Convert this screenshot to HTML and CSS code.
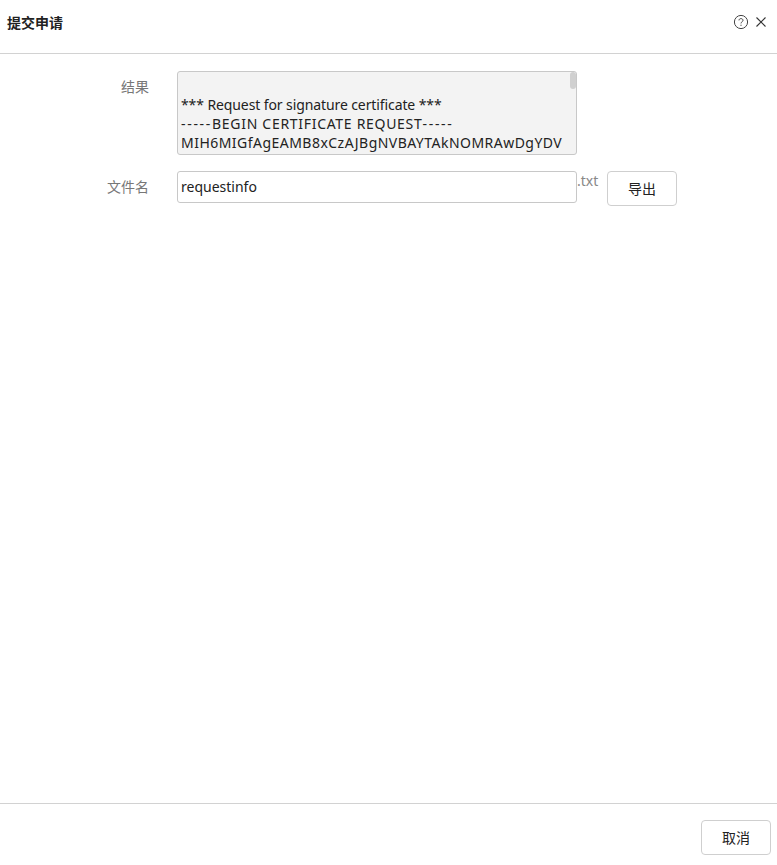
FILE: index.html
```html
<!DOCTYPE html>
<html lang="zh">
<head>
<meta charset="utf-8">
<title>提交申请</title>
<link rel="stylesheet" href="styles.css">
</head>
<body>
<div class="dialog">
  <header class="head">
    <h1 class="title">提交申请</h1>
    <div class="tools">
      <svg class="icon" width="16" height="16" viewBox="0 0 16 16" fill="none" stroke="#444" stroke-width="1"><circle cx="8" cy="8" r="6.6"/><path d="M6 6.4C6 5.2 6.9 4.6 8 4.6s2 .7 2 1.7c0 1.5-2 1.5-2 3.1"/><path d="M8 10.7v1.2"/></svg>
      <svg class="icon" width="12" height="12" viewBox="0 0 12 12" fill="none" stroke="#333" stroke-width="1.1"><path d="M1.5 1.5l9 9M10.5 1.5l-9 9"/></svg>
    </div>
  </header>
  <main class="body">
    <div class="row row-result">
      <label class="label label-result">结果</label>
      <div class="area">
        <div class="line">&nbsp;</div>
        <div class="line line-plain">*** Request for signature certificate ***</div>
        <div class="line line-head"><span class="dash">-----</span>BEGIN CERTIFICATE REQUEST<span class="dash">-----</span></div>
        <div class="line line-caps">MIH6MIGfAgEAMB8xCzAJBgNVBAYTAkNOMRAwDgYDV</div>
        <span class="thumb"></span>
      </div>
    </div>
    <div class="row row-file">
      <label class="label label-file">文件名</label>
      <input class="name" type="text" value="requestinfo">
      <span class="ext">.txt</span>
      <button class="btn btn-export" type="button">导出</button>
    </div>
  </main>
  <footer class="foot">
    <button class="btn" type="button">取消</button>
  </footer>
</div>
</body>
</html>
```
FILE: styles.css
```css
* { box-sizing: border-box; }
html, body { margin: 0; height: 100%; }
body {
  background: #fff;
  font-family: "Noto Sans", "Noto Sans CJK SC", sans-serif;
  font-size: 14px;
  color: #333;
}
.dialog {
  width: 777px;
  height: 865px;
  display: flex;
  flex-direction: column;
  overflow: hidden;
}
.head {
  height: 54px;
  flex: none;
  display: flex;
  align-items: flex-start;
  justify-content: space-between;
  padding: 14px 10px 0 7px;
  border-bottom: 1px solid #d2d2d2;
}
.title {
  margin: 0;
  font-size: 14px;
  line-height: 18px;
  font-weight: 700;
  color: #222;
}
.tools {
  display: flex;
  align-items: center;
  gap: 6px;
}
.icon { display: block; }
.body {
  flex: 1;
  padding-top: 17px;
}
.row { display: flex; align-items: flex-start; }
.row-result { height: 100px; }
.label {
  width: 149px;
  flex: none;
  margin-right: 28px;
  text-align: right;
  color: #777;
  line-height: 20px;
}
.label-result { padding-top: 6px; }
.label-file { padding-top: 6px; }
.area {
  position: relative;
  width: 400px;
  height: 84px;
  flex: none;
  padding: 4px 3px 0;
  border: 1px solid #c8c8c8;
  border-radius: 3px;
  background: #f3f3f3;
  line-height: 19px;
  color: #222;
  overflow: hidden;
}
.line { white-space: pre; }
.line-plain { letter-spacing: -0.1px; }
.line-caps { letter-spacing: 0.47px; }
.line-head { letter-spacing: 0.7px; }
.dash { letter-spacing: 1.7px; }
.thumb {
  position: absolute;
  top: 0;
  right: 0;
  width: 6px;
  height: 17px;
  border-radius: 3px;
  background: #d0d0d0;
}
.name {
  width: 400px;
  height: 32px;
  flex: none;
  margin: 0;
  padding: 0 3px 1px;
  border: 1px solid #c8c8c8;
  border-radius: 3px;
  background: #fff;
  font: inherit;
  color: #222;
  outline: none;
}
.ext {
  width: 30px;
  flex: none;
  color: #888;
  line-height: 20px;
}
.btn {
  width: 70px;
  height: 35px;
  margin: 0;
  padding: 0 0 1px;
  background: #fff;
  border: 1px solid #cfcfcf;
  border-radius: 4px;
  font: inherit;
  color: #222;
}
.foot {
  height: 62px;
  flex: none;
  display: flex;
  justify-content: flex-end;
  padding: 16px 6px 0 0;
  border-top: 1px solid #d2d2d2;
}
```
